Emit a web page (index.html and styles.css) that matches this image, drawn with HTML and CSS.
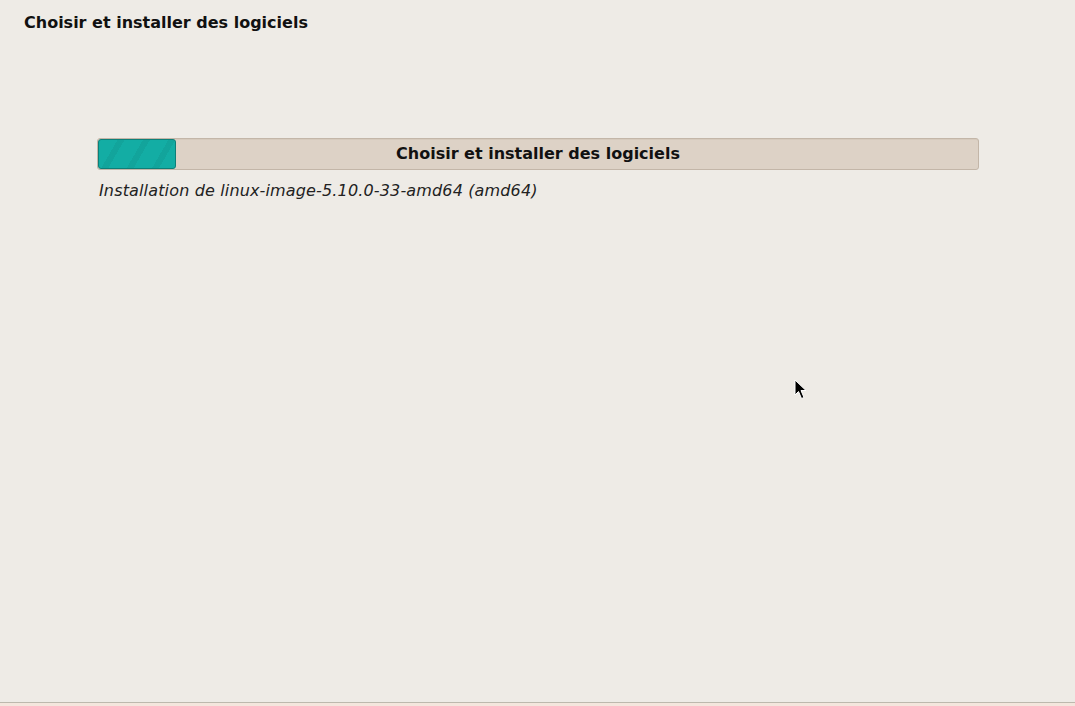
FILE: index.html
```html
<!DOCTYPE html>
<html lang="fr">
<head>
<meta charset="utf-8">
<title>Choisir et installer des logiciels</title>
<link rel="stylesheet" href="styles.css">
</head>
<body>
<div class="screen">
  <main class="content">
    <h1 class="title">Choisir et installer des logiciels</h1>
    <section class="progress-area">
      <div class="progress">
        <div class="progress-fill" style="width: 78px"></div>
        <div class="progress-label">Choisir et installer des logiciels</div>
      </div>
      <p class="status">Installation de linux-image-5.10.0-33-amd64 (amd64)</p>
    </section>
    <svg class="cursor" width="14" height="22" viewBox="0 0 14 22">
      <path d="M1 1 L1 16 L4.5 12.5 L7.5 19.5 L10 18.5 L7 11.5 L12 11.5 Z" fill="#000" stroke="#fff" stroke-width="1"/>
    </svg>
  </main>
  <footer class="bottom"></footer>
</div>
</body>
</html>
```

FILE: styles.css
```css
html, body {
  margin: 0;
  padding: 0;
}
body {
  width: 1075px;
  height: 706px;
  overflow: hidden;
  background: #eeebe6;
  font-family: "DejaVu Sans", sans-serif;
  color: #000;
}
.screen {
  display: flex;
  flex-direction: column;
  height: 706px;
}
.content {
  flex: 1;
  position: relative;
  padding: 12px 24px 0;
}
.title {
  margin: 0;
  font-size: 16px;
  font-weight: bold;
  line-height: 22px;
  color: #111;
}
.progress-area {
  margin: 104px 0 0 73px;
  width: 882px;
}
.progress {
  position: relative;
  height: 30px;
  border: 1px solid #c3b6a8;
  border-radius: 3px;
  background: #ddd2c6;
  box-shadow: inset 0 1px 0 #d6cabd;
}
.progress-fill {
  position: absolute;
  left: 0;
  top: 0;
  bottom: 0;
  border: 1px solid #0d7f78;
  border-radius: 3px;
  box-sizing: border-box;
  background-color: #13ada4;
  background-image: repeating-linear-gradient(120deg, rgba(0,0,0,0) 0 16px, rgba(0,60,55,0.08) 16px 22px);
}
.progress-label {
  position: relative;
  text-align: center;
  font-size: 16px;
  font-weight: bold;
  line-height: 30px;
  color: #111;
}
.status {
  margin: 10px 0 0 2px;
  font-size: 16px;
  letter-spacing: 0.15px;
  font-style: italic;
  line-height: 22px;
  color: #222;
}
.cursor {
  position: absolute;
  left: 794px;
  top: 379px;
}
.bottom {
  height: 3px;
  border-top: 1px solid #bdb8ad;
  background: #f4e6dd;
}
```
